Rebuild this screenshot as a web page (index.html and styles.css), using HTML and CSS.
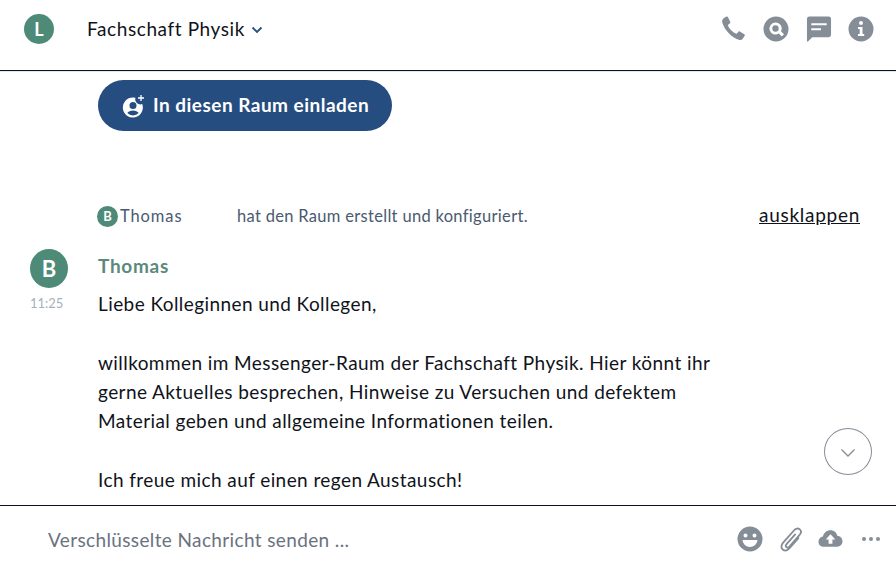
FILE: index.html
```html
<!DOCTYPE html>
<html lang="de">
<head>
<meta charset="utf-8">
<title>Fachschaft Physik</title>
<link rel="stylesheet" href="styles.css">
</head>
<body>
<div class="app">
  <header class="header">
    <div class="avatar avatar-room">L</div>
    <div class="room-name">Fachschaft Physik</div>
    <svg class="room-chevron" viewBox="0 0 12 8"><path d="M1.500 1.500 6 6l4.500-4.500" fill="none" stroke="#2a4f80" stroke-width="1.900"/></svg>
    <div class="header-icons">
      <svg class="icon icon-phone" viewBox="0 0 26 26"><path fill="#858d97" d="M2.600 2.200 5.400.6c.6-.3 1.200-.1 1.500.5L9.300 5.900c.2.500.1 1-.3 1.300L7.200 8.700c-.3.300-.4.700-.2 1.100 1.500 3.300 4.500 6.300 7.800 7.800.4.200.8.100 1.100-.2l1.500-1.700c.4-.4.900-.5 1.400-.2l4.500 2.700c.6.300.7 1 .4 1.500l-1.800 2.900c-.8 1.200-2 1.800-3.400 1.400C11 22 3.800 14.500 1.300 6.800.9 5.200 1.300 3.200 2.600 2.200z"/></svg>
      <svg class="icon" viewBox="0 0 26 26"><path fill="#858d97" fill-rule="evenodd" d="M13 .5a12.500 12.500 0 1 1 0 25 12.500 12.500 0 0 1 0-25zM12.500 6.500a6 6 0 1 0 3.300 11l3 3 2.200-2.200-3-3a6 6 0 0 0-5.500-8.800zm0 2.800a3.200 3.200 0 1 1 0 6.400 3.200 3.200 0 0 1 0-6.400z"/></svg>
      <svg class="icon" viewBox="0 0 26 27"><path fill="#858d97" fill-rule="evenodd" d="M3 .5h20a2.500 2.500 0 0 1 2.500 2.500v16.500a2.500 2.500 0 0 1-2.500 2.500H6l-4.500 4.500c-.5.300-1 0-1-.5V3A2.500 2.500 0 0 1 3 .5zM5 7.500v2.200h16V7.500zm0 5.200v2.200h10v-2.200z"/></svg>
      <svg class="icon" viewBox="0 0 26 26"><path fill="#858d97" fill-rule="evenodd" d="M13 .5a12.500 12.500 0 1 1 0 25 12.500 12.500 0 0 1 0-25zM13 5a2 2 0 1 0 0 4 2 2 0 0 0 0-4zm-3 6v2h1.700v5H10v2h6.200v-2h-1.700v-7z"/></svg>
    </div>
  </header>

  <main class="timeline">
    <button class="invite">
      <svg class="invite-icon" viewBox="0 0 24 24"><path fill="#fff" fill-rule="evenodd" d="M11 3.500a10 10 0 0 1 2.500.3 5 5 0 0 0 6.700 6.200 10 10 0 1 1-9.200-6.500zm0 4.500a3.500 3.500 0 1 0 0 7 3.500 3.500 0 0 0 0-7zm0 8.500c-2.500 0-4.700 1-5.700 2.500a8 8 0 0 0 11.400 0c-1-1.500-3.200-2.500-5.700-2.500z"/><path d="M19 1v6M16 4h6" stroke="#fff" stroke-width="1.300" fill="none"/></svg>
      <span class="invite-label">In diesen Raum einladen</span>
    </button>

    <div class="state-row">
      <div class="avatar avatar-small">B</div>
      <span class="state-name">Thomas</span>
      <span class="state-text">hat den Raum erstellt und konfiguriert.</span>
      <a class="expand">ausklappen</a>
    </div>

    <article class="message">
      <div class="message-side">
        <div class="avatar avatar-sender">B</div>
        <time class="time">11:25</time>
      </div>
      <div class="message-body">
        <div class="sender">Thomas</div>
        <p class="para">Liebe Kolleginnen und Kollegen,</p>
        <p class="para">willkommen im Messenger-Raum der Fachschaft Physik. Hier könnt ihr<br>gerne Aktuelles besprechen, Hinweise zu Versuchen und defektem<br>Material geben und allgemeine Informationen teilen.</p>
        <p class="para">Ich freue mich auf einen regen Austausch!</p>
      </div>
    </article>

    <div class="scroll-down">
      <svg viewBox="0 0 16 10" class="scroll-chevron"><path d="M1.500 1.500 8 8l6.500-6.500" fill="none" stroke="#858d97" stroke-width="1.300"/></svg>
    </div>
  </main>

  <footer class="composer">
    <div class="composer-input">Verschlüsselte Nachricht senden ...</div>
    <div class="composer-icons">
      <svg class="icon icon-smile" viewBox="0 0 26 26"><path fill="#858d97" fill-rule="evenodd" d="M13 .5a12.500 12.500 0 1 1 0 25 12.500 12.500 0 0 1 0-25zM8.500 7.500a2 2 0 1 0 0 4 2 2 0 0 0 0-4zm9 0a2 2 0 1 0 0 4 2 2 0 0 0 0-4zM5.500 14c.5 4 3.500 7 7.500 7s7-3 7.500-7z"/></svg>
      <svg class="icon icon-clip" viewBox="0 0 26 26"><path fill="none" stroke="#858d97" stroke-width="2" stroke-linecap="round" d="M17.500 8 8.200 18.500c-1.200 1.400-1 2.600-.2 3.300s2.200.7 3.300-.6L22.300 8.600c2-2.300 1.800-4.600.2-6S18.300 1.300 16.400 3.500L4.500 17c-2.600 3-2.300 5.800-.4 7.400s4.800 1.400 7.300-1.400L21 12"/></svg>
      <svg class="icon-cloud" viewBox="0 0 26 20"><path fill="#858d97" fill-rule="evenodd" d="M13 1c3.500 0 6.300 2.300 7 5.500 3 .3 5.500 2.600 5.500 5.800 0 3.500-2.800 5.700-6 5.700H6c-3 0-5.500-2-5.500-5.200 0-2.800 2-4.900 4.600-5.300C6 3.800 9 1 13 1zm0 4-5 5.500h3V15h4v-4.500h3z"/></svg>
      <svg class="icon-more" viewBox="0 0 20 6"><circle cx="3" cy="3" r="2" fill="#858d97"/><circle cx="10" cy="3" r="2" fill="#858d97"/><circle cx="17" cy="3" r="2" fill="#858d97"/></svg>
    </div>
  </footer>
</div>
</body>
</html>
```

FILE: styles.css
```css
* { box-sizing: border-box; }
html, body { margin: 0; height: 100%; }
body { background: #fff; color: #10131a; font-family: "Lato", "Open Sans", sans-serif; overflow: hidden; }
.app { display: flex; flex-direction: column; width: 896px; height: 563px; }

.header { flex: 0 0 71px; display: flex; align-items: center; padding: 0 22px 12px 24px; border-bottom: 1px solid #0b1220; box-shadow: 0 1px 0 #e3e8f0; }
.avatar { display: flex; align-items: center; justify-content: center; border-radius: 50%; background: #4d8a78; color: #fff; font-weight: 700; flex: none; }
.avatar-room { width: 30px; height: 30px; font-size: 18px; }
.room-name { margin-left: 33px; margin-top: -1px; font-size: 19px; letter-spacing: .6px; }
.room-chevron { width: 12px; height: 8px; margin-left: 6px; margin-top: 2px; }
.header-icons { margin-left: auto; display: flex; align-items: center; gap: 16.500px; }
.icon { width: 26px; height: 26px; display: block; }

.timeline { position: relative; flex: 1; min-height: 0; overflow: hidden; padding: 9px 0 0 30px; }
.invite { display: flex; align-items: center; gap: 7px; height: 51px; width: 294px; margin-left: 68px; padding: 0 0 0 24px; border: 0; border-radius: 26px; background: #254d80; color: #fff; font: 700 19px "Lato", sans-serif; letter-spacing: .48px; }
.invite-icon { width: 24px; height: 24px; flex: none; }
.invite-label { margin-top: -3px; }

.state-row { display: flex; align-items: center; height: 24px; margin: 73px 36px 0 67px; font-size: 16.500px; color: #4a5a70; }
.avatar-small { width: 21px; height: 21px; font-size: 13px; }
.state-name { margin-left: 2px; width: 117px; letter-spacing: .9px; }
.state-text { flex: 1; letter-spacing: .31px; }
.expand { color: #10131a; font-size: 19px; letter-spacing: .72px; text-decoration: underline; margin-top: -4px; }

.message { display: flex; margin-top: 21px; }
.message-side { width: 68px; display: flex; flex-direction: column; }
.avatar-sender { width: 38px; height: 39px; font-size: 22px; }
.time { margin-top: 7px; font-size: 13px; color: #a9afb8; }
.sender { font-size: 19px; font-weight: 700; color: #5b8a7c; letter-spacing: .7px; line-height: 34px; margin-bottom: 6px; }
.para { margin: 0 0 29.300px; font-size: 19px; letter-spacing: .42px; line-height: 29.300px; }

.scroll-down { position: absolute; right: 24px; top: 357px; width: 48px; height: 47px; border: 1px solid #858d97; border-radius: 50%; background: #fff; display: flex; align-items: center; justify-content: center; }
.scroll-chevron { width: 16px; height: 10px; margin-top: 3px; }

.composer { flex: 0 0 58px; display: flex; align-items: center; padding: 9px 15px 0 48px; border-top: 1px solid #0b1220; background: #fff; position: relative; }
.composer-input { font-size: 19px; letter-spacing: .37px; color: #6a7280; }
.composer-icons { margin-left: auto; display: flex; align-items: center; gap: 15px; }
.icon-smile { width: 26px; height: 26px; margin-right: 1px; }
.icon-clip { width: 24px; height: 26px; }
.icon-cloud { width: 25px; height: 20px; margin-right: 3px; }
.icon-more { width: 20px; height: 6px; }
```
